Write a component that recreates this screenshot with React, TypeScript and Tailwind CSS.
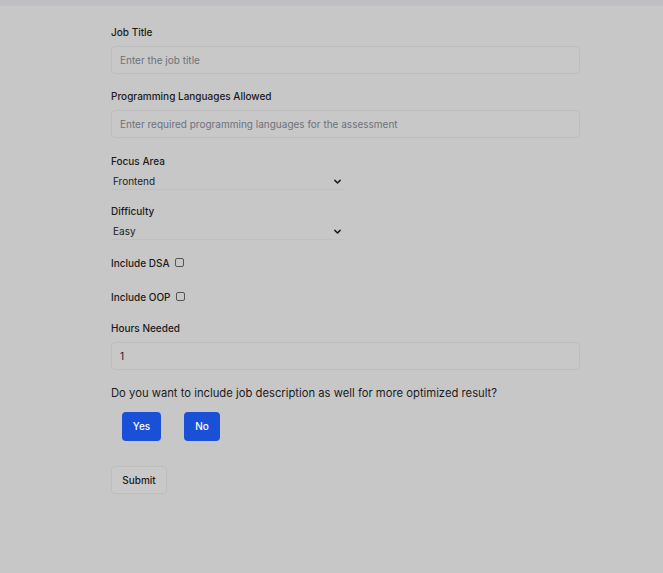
import React, { useState } from 'react';

const font = { fontFamily: 'Inter, "Liberation Sans", sans-serif' };

const Chevron: React.FC = () => (
  <svg className="w-[9px] h-[9px] text-[#1c1c1c]" fill="none" stroke="currentColor" viewBox="0 0 24 24">
    <path strokeLinecap="round" strokeLinejoin="round" strokeWidth="4" d="M5 9l7 7 7-7" />
  </svg>
);

const Label: React.FC<{ children: React.ReactNode; className?: string }> = ({ children, className = '' }) => (
  <label className={`block text-[10px] leading-4 font-medium text-[#1c1c1c] ${className}`}>{children}</label>
);

export default function App() {
  const [hours, setHours] = useState('1');

  return (
    <div style={font} className="min-h-[573px] w-full bg-[#c7c7c7]">
      {/* top strip */}
      <div className="h-[6px] bg-[#bebec3] border-b border-[#c2c2c4]" />

      <form className="pl-[111px] w-[580px] flex flex-col" onSubmit={e => e.preventDefault()}>
        <Label className="mt-[18px]">Job Title</Label>
        <input
          type="text"
          placeholder="Enter the job title"
          className="mt-[6px] h-[28px] w-[469px] px-2 text-[10px] bg-[#c8c8c8] border border-[#bdbdbd] rounded-[4px] placeholder:text-[#6d727c] text-[#1c1c1c] outline-none"
        />

        <Label className="mt-[14px]">Programming Languages Allowed</Label>
        <input
          type="text"
          placeholder="Enter required programming languages for the assessment"
          className="mt-[6px] h-[28px] w-[469px] px-2 text-[10px] bg-[#c8c8c8] border border-[#bdbdbd] rounded-[4px] placeholder:text-[#6d727c] text-[#1c1c1c] outline-none"
        />

        <Label className="mt-[15px]">Focus Area</Label>
        <div className="mt-[5px] h-[16px] w-[234px] flex items-center justify-between pl-[2px] pr-[3px] border-b border-[#c0c0c0] text-[10px] text-[#1c1c1c]">
          <span>Frontend</span>
          <Chevron />
        </div>

        <Label className="mt-[13px]">Difficulty</Label>
        <div className="mt-[5px] h-[16px] w-[234px] flex items-center justify-between pl-[2px] pr-[3px] border-b border-[#c0c0c0] text-[10px] text-[#1c1c1c]">
          <span>Easy</span>
          <Chevron />
        </div>

        <div className="mt-[15px] flex items-center gap-[5px]">
          <Label>Include DSA</Label>
          <span className="w-[9px] h-[9px] border border-[#555] rounded-[2px] -mt-[2px]" />
        </div>

        <div className="mt-[18px] flex items-center gap-[5px]">
          <Label>Include OOP</Label>
          <span className="w-[9px] h-[9px] border border-[#555] rounded-[2px] -mt-[2px]" />
        </div>

        <Label className="mt-[15px]">Hours Needed</Label>
        <input
          type="number"
          value={hours}
          onChange={e => setHours(e.target.value)}
          className="mt-[6px] h-[28px] w-[469px] px-2 text-[10px] bg-[#c8c8c8] border border-[#bdbdbd] rounded-[4px] text-[#1c1c1c] outline-none [appearance:textfield]"
        />

        <p className="mt-[13px] text-[11.25px] leading-5 text-[#1c1c1c]">
          Do you want to include job description as well for more optimized result?
        </p>

        <div className="mt-[9px] ml-[11px] flex gap-[23px]">
          <button type="button" className="h-[29px] w-[39px] rounded-[4px] bg-[#1a4fd8] text-white text-[10px] font-medium">Yes</button>
          <button type="button" className="h-[29px] w-[36px] rounded-[4px] bg-[#1a4fd8] text-white text-[10px] font-medium">No</button>
        </div>

        <button
          type="submit"
          className="mt-[25px] h-[28px] w-[56px] rounded-[4px] border border-[#bdbdbd] bg-[#c9c9c9] text-[10px] font-medium text-[#1c1c1c]"
        >
          Submit
        </button>
      </form>
    </div>
  );
}
